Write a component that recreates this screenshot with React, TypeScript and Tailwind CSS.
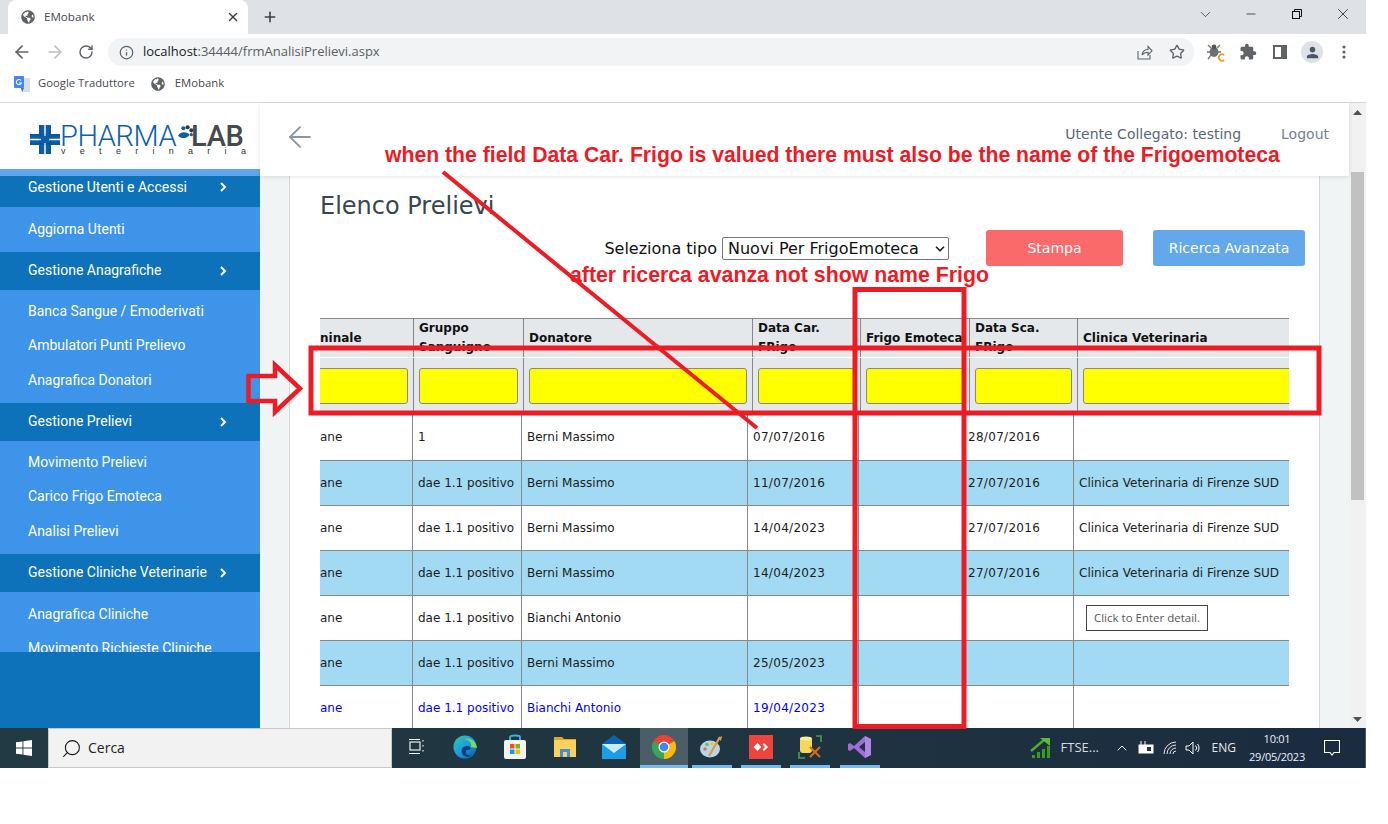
import React from "react";
import { ArrowLeft, ArrowRight, RotateCw, Info, Star, X, Plus, ChevronDown, Minus, Search, ChevronUp } from "lucide-react";
import { FaGlobeAmericas } from "react-icons/fa";
import { MdExtension, MdPerson } from "react-icons/md";

const dejavu = "font-['DejaVu_Sans',sans-serif]";

function Globe() {
  return <FaGlobeAmericas size={14} className="text-[#5f6368] shrink-0" />;
}

function BrowserChrome() {
  return (
    <div className="shrink-0 font-['Open_Sans',sans-serif]">
      <div className="h-[34px] bg-[#dee1e6] flex items-end pl-2">
        <div className="w-[240px] h-[34px] bg-white rounded-t-lg flex items-center pl-[13px] pr-2 gap-[9px]">
          <Globe />
          <span className="text-[11.6px] text-[#45494e] flex-1">EMobank</span>
          <X size={14} strokeWidth={2.4} className="text-[#3c4043]" />
        </div>
        <div className="h-[34px] flex items-center pl-[14px]">
          <Plus size={16} strokeWidth={2.4} className="text-[#3c4043]" />
        </div>
        <div className="flex-1" />
        <div className="h-[34px] flex pb-[6px]">
          <div className="w-[46px] flex items-center justify-center"><ChevronDown size={17} strokeWidth={1} className="text-[#222]" /></div>
          <div className="w-[46px] flex items-center justify-center"><Minus size={14} strokeWidth={1.2} className="text-[#111]" /></div>
          <div className="w-[46px] flex items-center justify-center">
            <svg width="12" height="12" viewBox="0 0 12 12" fill="none" stroke="#111"><rect x="1.5" y="3.5" width="7" height="7" /><path d="M3.5 3.5V1.5H10.5V8.5H8.5" /></svg>
          </div>
          <div className="w-[46px] flex items-center justify-center"><X size={18} strokeWidth={1} className="text-[#111]" /></div>
        </div>
      </div>
      <div className="h-[34px] bg-white flex items-center pt-[2px]">
        <div className="w-[108px] flex items-center pl-[12px] gap-[13px]">
          <ArrowLeft size={20} strokeWidth={2} className="text-[#5f6368]" />
          <ArrowRight size={20} strokeWidth={2} className="text-[#bcbfc3]" />
          <RotateCw size={16} strokeWidth={2.2} className="text-[#5f6368]" />
        </div>
        <div className="w-[1086px] h-[28px] rounded-full bg-[#f1f3f4] flex items-center pl-[11px] pr-[9px]">
          <Info size={15} strokeWidth={2} className="text-[#5f6368]" />
          <span className="ml-[9px] text-[13px] text-[#5a5e63] flex-1"><span className="text-[#202124]">localhost</span>:34444/frmAnalisiPrelievi.aspx</span>
          <svg width="16" height="16" viewBox="0 0 16 16" fill="none" stroke="#5f6368" strokeWidth="1.1" className="mr-4">
            <path d="M1 7V15H13V11" />
            <path d="M5 11C5.5 7.5 8 5.5 11 5.5V2.5L15 6.8L11 11V8.2C8.5 8.2 6.5 9 5 11Z" />
          </svg>
          <Star size={16} strokeWidth={2} className="text-[#5f6368]" />
        </div>
        <div className="flex items-center pl-[6px]">
          <div className="w-8 flex justify-center">
            <svg width="20" height="20" viewBox="0 0 20 20">
              <ellipse cx="8" cy="10" rx="4.5" ry="5" fill="#6b6f73" />
              <circle cx="8" cy="5" r="2.4" fill="#555" />
              <path d="M2 3L5 6M14 3L11 6M1 10H4M15 10H12M2 17L5 13" stroke="#777" strokeWidth="1.3" fill="none" />
              <path d="M18 13A3.2 3.2 0 1 0 18 18" stroke="#f5941d" strokeWidth="1.8" fill="none" />
            </svg>
          </div>
          <div className="w-8 flex justify-center"><MdExtension size={18} className="text-[#5f6368]" /></div>
          <div className="w-8 flex justify-center">
            <svg width="14" height="14" viewBox="0 0 14 14"><rect x="0" y="0" width="14" height="14" fill="#5f6368" /><rect x="2" y="2" width="6" height="10" fill="#fff" /></svg>
          </div>
          <div className="w-8 flex justify-center">
            <div className="w-[22px] h-[22px] rounded-full bg-[#dee1e6] flex items-center justify-center">
              <MdPerson size={17} className="text-[#4a5568]" />
            </div>
          </div>
          <div className="w-8 flex justify-center">
            <svg width="4" height="14" viewBox="0 0 4 14" fill="#5f6368"><circle cx="2" cy="2" r="1.6" /><circle cx="2" cy="7" r="1.6" /><circle cx="2" cy="12" r="1.6" /></svg>
          </div>
        </div>
      </div>
      <div className="h-[35px] bg-white border-b border-[#d8d8d8] flex items-center pl-[14px] pb-[3px]">
        <svg width="16" height="16" viewBox="0 0 16 16" className="shrink-0">
          <path d="M6 2H16V16H8Z" fill="#dadce0" />
          <rect x="0" y="0" width="10" height="12" rx="1" fill="#4285f4" />
          <path d="M7 12L8 16L10 12Z" fill="#3367d6" />
          <path d="M7 4.5A2.6 2.6 0 1 0 7.4 7H5" stroke="#fff" strokeWidth="1.1" fill="none" />
        </svg>
        <span className="ml-2 text-[11.3px] text-[#45494e]">Google Traduttore</span>
        <span className="ml-[16px]"><Globe /></span>
        <span className="ml-[10px] text-[11.3px] text-[#45494e]">EMobank</span>
      </div>
    </div>
  );
}

function Logo() {
  return (
    <div className="h-[66px] bg-white flex items-start pl-[30px] pt-[22px] shrink-0">
      <svg width="30" height="29" viewBox="0 0 30 29" className="shrink-0">
        <path d="M9 0H21V9H30V20H21V29H9V20H0V9H9Z" fill="#0b5ea8" />
        <path d="M15 0V11M15 18V29M0 14.5H11M19 14.5H30" stroke="#fff" strokeWidth="1.4" />
        <path d="M10 0V29M20 0V29M0 10H30M0 19H30" stroke="#123a5e" strokeWidth="0.6" opacity="0.5" />
      </svg>
      <div className="flex flex-col w-[186px]">
        <div className="flex items-start h-[22px]">
          <span className="font-['Roboto',sans-serif] font-light text-[29px] leading-[22px] text-[#0b5ea8] tracking-[-0.4px] w-[118px] whitespace-nowrap">PHARMA</span>
          <svg width="16" height="15" viewBox="0 0 15 14" className="shrink-0">
            <path d="M0 10C3 6 7 6 11 9C8 13 3 13 0 10Z" fill="#0b5ea8" />
            <circle cx="5" cy="3" r="1.9" fill="#0b5ea8" /><circle cx="9" cy="2" r="1.9" fill="#2d3a44" /><circle cx="12.5" cy="5" r="1.9" fill="#2d3a44" /><circle cx="12.5" cy="9" r="1.5" fill="#0b5ea8" />
          </svg>
          <span className="font-['Roboto',sans-serif] font-medium text-[29px] leading-[22px] text-[#454a4e] tracking-[-0.3px] ml-[-3px] whitespace-nowrap">LAB</span>
        </div>
        <div className="font-['Liberation_Sans',sans-serif] text-[9px] leading-[8px] text-[#333] flex justify-between pl-[1px]">
          {"veterinaria".split("").map((c, i) => <span key={i}>{c}</span>)}
        </div>
      </div>
    </div>
  );
}

function NavHead({ label }: { label: string }) {
  return (
    <div className="h-[38px] shrink-0 bg-[#0e72bb] flex items-center pl-7 pr-[33px] pb-[2px] justify-between text-sm font-normal text-white">
      <span className="whitespace-nowrap">{label}</span>
      <svg width="7" height="10" viewBox="0 0 7 10" fill="none" stroke="#fff" strokeWidth="2" className="mt-[2px]"><path d="M1 1L5 5L1 9" /></svg>
    </div>
  );
}

function NavItem({ label }: { label: string }) {
  return <div className="h-[34.5px] flex items-center pl-7 text-sm font-normal text-white whitespace-nowrap shrink-0">{label}</div>;
}

function Sidebar() {
  return (
    <aside className="w-[260px] shrink-0 flex flex-col font-['Roboto',sans-serif]">
      <Logo />
      <nav className="h-[483px] bg-[#3d94e8] overflow-hidden flex flex-col shrink-0">
        <div className="h-[7px] bg-[#60a6ea] shrink-0" />
        <div className="h-[31px] shrink-0 bg-[#0e72bb] flex items-start pl-7 pr-[33px] pt-[1px] justify-between text-sm font-normal text-white">
          <span>Gestione Utenti e Accessi</span>
          <svg width="7" height="10" viewBox="0 0 7 10" fill="none" stroke="#fff" strokeWidth="2" className="mt-[5px]"><path d="M1 1L5 5L1 9" /></svg>
        </div>
        <div className="py-[5px] h-[45px] shrink-0"><NavItem label="Aggiorna Utenti" /></div>
        <NavHead label="Gestione Anagrafiche" />
        <div className="pt-[3.5px] h-[113px] shrink-0">
          <NavItem label="Banca Sangue / Emoderivati" />
          <NavItem label="Ambulatori Punti Prelievo" />
          <NavItem label="Anagrafica Donatori" />
        </div>
        <NavHead label="Gestione Prelievi" />
        <div className="pt-[3.5px] h-[113px] shrink-0">
          <NavItem label="Movimento Prelievi" />
          <NavItem label="Carico Frigo Emoteca" />
          <NavItem label="Analisi Prelievi" />
        </div>
        <NavHead label="Gestione Cliniche Veterinarie" />
        <div className="pt-[4.5px] shrink-0">
          <NavItem label="Anagrafica Cliniche" />
          <NavItem label="Movimento Richieste Cliniche" />
        </div>
      </nav>
      <div className="flex-1 bg-[#0e72bb]" />
    </aside>
  );
}

function TopBar() {
  return (
    <header className={`h-[73px] shrink-0 bg-white shadow-[0_1px_4px_rgba(0,0,0,0.1)] flex items-start pt-[19px] pr-5 pl-[23px] z-10 ${dejavu}`}>
      <ArrowLeft size={34} strokeWidth={1.3} className="text-[#8a96a0] mt-[-2px]" />
      <div className="flex-1" />
      <span className="text-sm leading-6 text-[#5a6873]">Utente Collegato: testing</span>
      <span className="text-sm leading-6 text-[#76838f] ml-10">Logout</span>
    </header>
  );
}

const headCols = "grid-cols-[93px_110px_229px_108px_109px_108px_212px]";
const bodyCols = "grid-cols-[92px_109px_226px_111px_104px_111px_216px]";

const heads = ["ninale", "Gruppo Sanguigno", "Donatore", "Data Car. FRigo", "Frigo Emoteca", "Data Sca. FRigo", "Clinica Veterinaria"];

type Row = string[];
const rows: Row[] = [
  ["ane", "1", "Berni Massimo", "07/07/2016", "", "28/07/2016", ""],
  ["ane", "dae 1.1 positivo", "Berni Massimo", "11/07/2016", "", "27/07/2016", "Clinica Veterinaria di Firenze SUD"],
  ["ane", "dae 1.1 positivo", "Berni Massimo", "14/04/2023", "", "27/07/2016", "Clinica Veterinaria di Firenze SUD"],
  ["ane", "dae 1.1 positivo", "Berni Massimo", "14/04/2023", "", "27/07/2016", "Clinica Veterinaria di Firenze SUD"],
  ["ane", "dae 1.1 positivo", "Bianchi Antonio", "", "", "", ""],
  ["ane", "dae 1.1 positivo", "Berni Massimo", "25/05/2023", "", "", ""],
  ["ane", "dae 1.1 positivo", "Bianchi Antonio", "19/04/2023", "", "", ""],
];

function Grid() {
  return (
    <div className={`w-[969px] overflow-hidden text-xs ${dejavu}`}>
      <div className="border-t border-[#888]">
        <div className={`grid ${headCols} h-[38px] bg-[#e4e8eb] overflow-hidden`}>
          {heads.map((h, i) => (
            <div key={i} className={`h-[38px] flex items-center font-bold text-[#111] leading-[19px] overflow-hidden ${i === 0 ? "" : "border-l border-[#888] pl-[5px] pr-1"}`}>
              <span>{h}</span>
            </div>
          ))}
        </div>
        <div className="h-px bg-white" />
        <div className={`grid ${headCols} h-[56px] bg-[#e4e8eb] border-b border-[#888]`}>
          {heads.map((_, i) => (
            <div key={i} className={`h-[55px] pt-[10px] overflow-hidden ${i === 0 ? "pr-[5px] ml-[-6px]" : "border-l border-[#888] pl-[5px] pr-[5px]"} ${i === 6 ? "pr-0 mr-[-10px]" : ""}`}>
              <input aria-label={heads[i]} className="block w-full h-9 bg-[#ffff00] border border-[#888] rounded-[3px]" />
            </div>
          ))}
        </div>
      </div>
      {rows.map((r, ri) => (
        <div key={ri} className={`grid ${bodyCols} ${ri === 0 ? "h-[47px]" : "h-[45px]"} border-b border-[#888] ${ri % 2 === 1 ? "bg-[#a1daf2]" : "bg-white"} ${ri === 6 ? "text-[#0000ff]" : "text-[#1c1c1c]"}`}>
          {r.map((c, ci) => (
            <div key={ci} className={`flex items-center whitespace-nowrap overflow-hidden ${ci === 0 ? "" : "border-l border-[#888] pl-[5px]"} ${ci === 3 || ci === 5 ? "tracking-[0.3px]" : ""}`}>{c}</div>
          ))}
        </div>
      ))}
    </div>
  );
}

function Content() {
  return (
    <div className="flex-1 min-h-0 bg-[#f0f4f4] pl-[29px] pr-[29px] overflow-hidden">
      <div className="h-full bg-white border-x border-[#d5d8da] pl-[30px] pr-[30px]">
        <h1 className={`text-2xl leading-[30px] text-[#37474f] pt-[15px] h-[43px] box-content ${dejavu} font-normal`}>Elenco Prelievi</h1>
        <div className={`flex justify-end items-start mr-[-16px] h-[36px] mt-[-4px] ${dejavu}`}>
          <label className="text-base leading-[23px] text-[#111] mt-[7px] whitespace-nowrap">Seleziona tipo</label>
          <div className="w-[227px] h-[23px] mt-[7px] ml-[5px] bg-white border border-[#767676] rounded-[2px] flex items-center pl-[5px] pr-[1px] justify-between text-base text-[#111] whitespace-nowrap">
            <span>Nuovi Per FrigoEmoteca</span>
            <ChevronDown size={14} strokeWidth={3} className="text-[#222]" />
          </div>
          <button className="w-[137px] h-9 ml-[37px] rounded-[3px] bg-[#fb6a6a] text-white text-sm">Stampa</button>
          <button className="w-[152px] h-9 ml-[30px] rounded-[3px] bg-[#62a8ea] text-white text-sm">Ricerca Avanzata</button>
        </div>
        <div className="h-[52px]" />
        <Grid />
      </div>
    </div>
  );
}

function PageScrollbar() {
  return (
    <div className="w-[17px] shrink-0 bg-[#f1f1f1] flex flex-col items-center">
      <div className="h-[17px] flex items-center justify-center shrink-0 pt-[1px]">
        <svg width="9" height="5" viewBox="0 0 9 5" fill="#505050"><path d="M4.5 0L9 5H0Z" /></svg>
      </div>
      <div className="h-[52px] shrink-0" />
      <div className="w-[13px] h-[328px] bg-[#c1c1c1] shrink-0" />
      <div className="flex-1" />
      <div className="h-[17px] flex items-center justify-center shrink-0">
        <svg width="9" height="5" viewBox="0 0 9 5" fill="#505050"><path d="M4.5 5L9 0H0Z" /></svg>
      </div>
    </div>
  );
}

function TaskSlot({ children, w, active, under }: { children: React.ReactNode; w: string; active?: boolean; under?: boolean }) {
  return (
    <div className={`${w} h-10 shrink-0 flex flex-col items-center ${active ? "bg-[#4b5d66]" : ""}`}>
      <div className="flex-1 flex items-center justify-center">{children}</div>
      {active ? <div className="w-full h-[3px] bg-[#76b9ed]" /> : under ? <div className="w-10 h-[3px] bg-[#76b9ed]" /> : <div className="h-[3px]" />}
    </div>
  );
}

function Taskbar() {
  return (
    <footer className="h-10 shrink-0 bg-gradient-to-r from-[#213a44] via-[#1f3540] to-[#1b2b40] flex items-center font-['Open_Sans',sans-serif] text-white border-r border-[#556]">
      <div className="w-12 h-10 flex items-center justify-center shrink-0">
        <svg width="16" height="16" viewBox="0 0 16 16" fill="#fff"><path d="M0 2.3L6.5 1.4V7.6H0ZM7.4 1.3L16 0V7.6H7.4ZM0 8.4H6.5V14.6L0 13.7ZM7.4 8.4H16V16L7.4 14.7Z" /></svg>
      </div>
      <div className="w-[344px] h-10 bg-[#f2f2f2] border border-[#c8c8c8] flex items-center pl-[12px] shrink-0">
        <Search size={21} strokeWidth={1.2} className="text-[#111] -scale-x-100" />
        <span className="ml-[6px] text-[#222] text-sm">Cerca</span>
      </div>
      <TaskSlot w="w-[49px]">
        <svg width="17" height="17" viewBox="0 0 17 17" fill="none" stroke="#fff" strokeWidth="1.1"><rect x="2" y="4" width="10" height="8" /><path d="M1 1.5H12M1 15.5H12M15 2V3.5M15 7V8.5M15 12V13.5" /></svg>
      </TaskSlot>
      <TaskSlot w="w-[47px]">
        <svg width="24" height="24" viewBox="0 0 24 24">
          <defs><linearGradient id="ed" x1="0" y1="0" x2="1" y2="1"><stop offset="0" stopColor="#36c7a4" /><stop offset="0.5" stopColor="#1b9de2" /><stop offset="1" stopColor="#0c59a4" /></linearGradient></defs>
          <circle cx="12" cy="12" r="11.5" fill="url(#ed)" />
          <path d="M24 13C23 6 17 2 11 4C16 4 19 8 18 12Z" fill="#7cdc5a" />
          <path d="M10 20C7 16 9 11 14 11C17 11 18 13 17 15C14 14 12 16 13 18C14 20 17 21 19 20C16 23 12 22 10 20Z" fill="#0b3f80" />
        </svg>
      </TaskSlot>
      <TaskSlot w="w-[54px]">
        <svg width="24" height="26" viewBox="0 0 24 26">
          <path d="M7 6V3C7 1 17 1 17 3V6" fill="none" stroke="#35b8ee" strokeWidth="1.8" />
          <rect x="1" y="6" width="22" height="19" rx="2" fill="#f4f4f4" />
          <rect x="7" y="10" width="4.5" height="4.5" fill="#f25022" /><rect x="12.5" y="10" width="4.5" height="4.5" fill="#7fba00" />
          <rect x="7" y="15.5" width="4.5" height="4.5" fill="#00a4ef" /><rect x="12.5" y="15.5" width="4.5" height="4.5" fill="#ffb900" />
        </svg>
      </TaskSlot>
      <TaskSlot w="w-[46px]">
        <svg width="22" height="20" viewBox="0 0 22 20">
          <path d="M0 0H8L10 2H22V5H0Z" fill="#e0a526" /><rect x="0" y="3" width="22" height="17" fill="#fbd15b" />
          <path d="M6 12H16V20H13V15H9V20H6Z" fill="#3c8fd8" />
        </svg>
      </TaskSlot>
      <TaskSlot w="w-[52px]">
        <svg width="24" height="24" viewBox="0 0 24 24">
          <path d="M12 0L24 9H0Z" fill="#0e63b0" /><rect x="0" y="9" width="24" height="15" fill="#1a9ee8" />
          <path d="M0 9L12 18L24 9" fill="#c9ecfb" />
        </svg>
      </TaskSlot>
      <TaskSlot w="w-[48px]" active>
        <svg width="24" height="24" viewBox="0 0 24 24">
          <path d="M12 12L22.4 6A12 12 0 0 0 1.6 6Z" fill="#ea4335" />
          <path d="M12 12L1.6 6A12 12 0 0 0 12 24Z" fill="#34a853" />
          <path d="M12 12L12 24A12 12 0 0 0 22.4 6Z" fill="#fbbc05" />
          <circle cx="12" cy="12" r="5.5" fill="#fff" /><circle cx="12" cy="12" r="4.3" fill="#4285f4" />
        </svg>
      </TaskSlot>
      <TaskSlot w="w-[48px]" under>
        <svg width="24" height="24" viewBox="0 0 24 24">
          <ellipse cx="10" cy="14" rx="10" ry="8.5" fill="#b9d6e8" />
          <circle cx="5" cy="14" r="1.8" fill="#e66" /><circle cx="7" cy="9.5" r="1.8" fill="#6bbf59" /><circle cx="12" cy="8.5" r="1.8" fill="#e8c93f" />
          <path d="M20 2L9 21" stroke="#e09a3d" strokeWidth="2.2" /><path d="M18 3L22 1L21 6Z" fill="#c9a35a" />
        </svg>
      </TaskSlot>
      <TaskSlot w="w-[49px]" under>
        <svg width="24" height="24" viewBox="0 0 24 24">
          <rect width="24" height="24" fill="#ef443b" />
          <path d="M8.5 8L12.5 12L8.5 16L4.5 12ZM15 8L19 12L15 16L13.5 14.5L16 12L13.5 9.5Z" fill="#fff" />
        </svg>
      </TaskSlot>
      <TaskSlot w="w-[50px]" under>
        <svg width="24" height="24" viewBox="0 0 24 24">
          <path d="M1 17V23H7M18 1H23V7" fill="none" stroke="#4a9d4f" strokeWidth="1.6" />
          <rect x="2" y="2" width="12" height="16" rx="3" fill="#f6d75a" /><ellipse cx="8" cy="3.5" rx="6" ry="2" fill="#fbeb9d" />
          <path d="M12 12L22 22M22 12L12 22" stroke="#d96b13" strokeWidth="2.2" />
        </svg>
      </TaskSlot>
      <TaskSlot w="w-[50px]" under>
        <svg width="24" height="24" viewBox="0 0 24 24">
          <path d="M17 1L23 4V20L17 23L6 13L2 16L0 15V9L2 8L6 11Z" fill="#9b6fd6" />
          <path d="M17 1L23 4V20L17 23Z" fill="#b58be8" opacity="0.8" />
          <path d="M17 7V17L11 12Z" fill="#25303e" />
        </svg>
      </TaskSlot>
      <div className="flex-1" />
      <div className="w-[24px] h-10 flex items-center justify-center shrink-0">
        <svg width="22" height="22" viewBox="0 0 22 22">
          <path d="M2 21V18H5V21ZM7 21V15H10V21ZM12 21V12H15V21ZM17 21V9H20V21Z" fill="#3a9b1f" />
          <path d="M1 14L14 3" stroke="#4fae2a" strokeWidth="2.4" /><path d="M10 1H20V9Z" fill="#5bbd2f" />
        </svg>
      </div>
      <span className="ml-[8px] w-[53px] text-[13px] text-[#d7dde2] whitespace-nowrap shrink-0">FTSE...</span>
      <ChevronUp size={16} strokeWidth={1.4} className="text-white shrink-0" />
      <svg width="16" height="14" viewBox="0 0 16 14" className="ml-[8px] shrink-0"><path d="M3 0V4M7 0V4" stroke="#fff" /><rect x="1" y="4" width="14" height="8" fill="#fff" stroke="#fff" /><rect x="9" y="6" width="4" height="4" fill="#21334a" /></svg>
      <svg width="16" height="14" viewBox="0 0 16 14" fill="none" stroke="#e8e8e8" className="ml-[9px] shrink-0"><path d="M1 13A12 12 0 0 1 13 1M4 13A9 9 0 0 1 13 4M7 13A6 6 0 0 1 13 7M10 13A3 3 0 0 1 13 10" /></svg>
      <svg width="16" height="14" viewBox="0 0 16 14" fill="none" stroke="#fff" className="ml-[6px] shrink-0"><path d="M1 5H4L8 1V13L4 9H1Z" /><path d="M10.5 4.5A3.5 3.5 0 0 1 10.5 9.5M12.5 3A6 6 0 0 1 12.5 11" /></svg>
      <span className="ml-[11px] text-xs text-[#e8e8e8] shrink-0">ENG</span>
      <div className="w-[84px] text-center text-[11px] tracking-[-0.25px] leading-[18px] text-[#eef] shrink-0 ml-[-1px] mr-[-2px]">
        <div>10:01</div>
        <div>29/05/2023</div>
      </div>
      <div className="w-[30px] flex justify-center shrink-0 mr-[18px]">
        <svg width="16" height="16" viewBox="0 0 16 16" fill="none" stroke="#fff" strokeWidth="1.1"><path d="M0.5 0.5H15.5V12.5H10L8 15L6 12.5H0.5Z" /></svg>
      </div>
    </footer>
  );
}

function Annotations() {
  const red = "#ed1c24";
  return (
    <div className="absolute inset-0 pointer-events-none z-20">
      <svg width="1388" height="824" viewBox="0 0 1388 824" fill="none" className="absolute left-0 top-0">
        <path d="M443 172L757 428" stroke={red} strokeWidth="4" />
        <rect x="311" y="348" width="1008" height="65" stroke={red} strokeWidth="5" />
        <rect x="855" y="289.5" width="109" height="437" stroke={red} strokeWidth="5" />
        <path d="M248.5 376H275V365L300 388.5L275 412V401H248.5Z" stroke={red} strokeWidth="4.5" />
      </svg>
      <div className="absolute left-[385px] top-[144px] text-[21.2px] leading-[22px] font-bold text-[#f01a24] whitespace-nowrap font-['Liberation_Sans',sans-serif]">when the field Data Car. Frigo is valued there must also be the name of the Frigoemoteca</div>
      <div className="absolute left-[570px] top-[264px] text-[21.3px] leading-[22px] font-bold text-[#f01a24] whitespace-nowrap font-['Liberation_Sans',sans-serif]">after ricerca avanza not show name Frigo</div>
      <div className="absolute left-[1086px] top-[605px] w-[122px] h-[26px] bg-white border border-[#444] flex items-center justify-center text-[11.5px] text-[#575757] font-['Open_Sans',sans-serif] whitespace-nowrap">Click to Enter detail.</div>
    </div>
  );
}

export default function App() {
  return (
    <div className="relative w-[1388px] h-[824px] bg-white overflow-hidden">
      <div className="w-[1366px] h-[768px] flex flex-col">
        <BrowserChrome />
        <div className="flex-1 min-h-0 flex">
          <Sidebar />
          <main className="flex-1 min-w-0 flex flex-col">
            <TopBar />
            <Content />
          </main>
          <PageScrollbar />
        </div>
        <Taskbar />
      </div>
      <Annotations />
    </div>
  );
}
